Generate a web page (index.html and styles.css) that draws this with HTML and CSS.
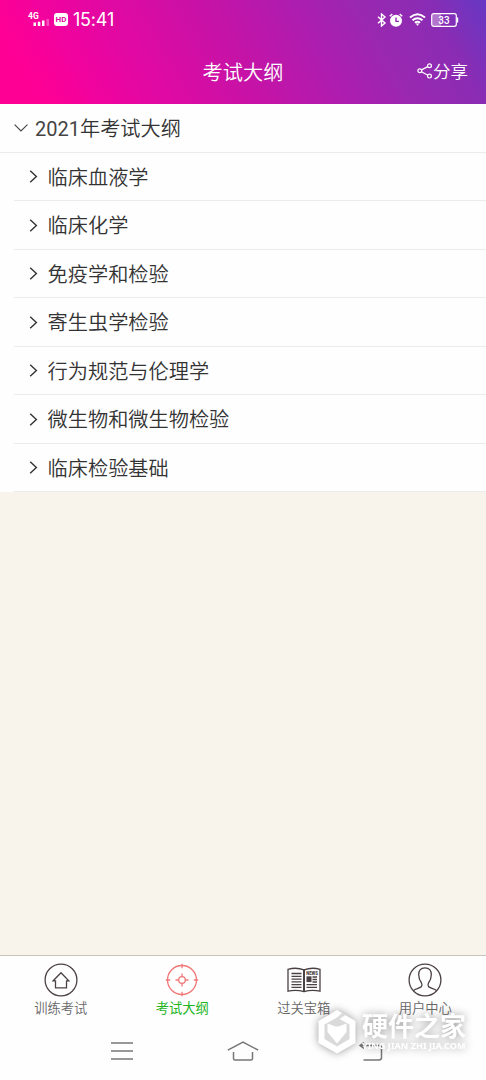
FILE: index.html
```html
<!DOCTYPE html>
<html lang="zh-CN">
<head>
<meta charset="utf-8">
<meta name="viewport" content="width=device-width">
<title>考试大纲</title>
<link rel="stylesheet" href="styles.css">
</head>
<body>
<div class="app">
  <header class="header">
    <div class="status">
      <div class="status-left">
        <svg class="signal" width="22" height="16" viewBox="0 0 22 16"><text class="net" x="0" y="7.3">4G</text><path d="M5.500 14v-3.500H8V14zM9.800 14v-4.300h2.500V14zM14 14V8.500h2.500V14z" fill="#fff"/><path d="M18.500 14V7H21v7z" fill="#fff" opacity=".3"/></svg>
        <span class="hd">HD</span>
        <span class="time">15:41</span>
      </div>
      <div class="status-right">
        <svg width="10" height="14" viewBox="0 0 10 14" fill="none" stroke="#fff" stroke-width="1.400"><path d="M1 3.800l7 6.200-3.500 3V1L8 4 1 10.200"/></svg>
        <svg class="alarm" width="14" height="14" viewBox="0 0 14 14"><circle cx="7" cy="7.800" r="6" fill="#fff"/><path d="M.8 3.200L3.300 1M13.200 3.200L10.700 1" stroke="#fff" stroke-width="1.500"/><path d="M7 4.500v3.900h3" fill="none" stroke="#9428b2" stroke-width="1.400"/></svg>
        <svg class="wifi" width="17" height="13" viewBox="0 0 17 13" fill="none" stroke="#fff" stroke-width="1.900"><path d="M1 4.500Q8.500-2 16 4.500M3.500 7.300Q8.500 3 13.500 7.300M5.900 9.800Q8.500 7.700 11.100 9.800"/><path d="M6.800 10.500h3.400L8.500 12.900z" fill="#fff" stroke="none"/></svg>
        <svg class="battery" width="28" height="14" viewBox="0 0 28 14"><rect x="1" y="1" width="9" height="12" fill="#fff" opacity=".35"/><rect x=".7" y=".7" width="24.600" height="12.600" rx="2" fill="none" stroke="#fff" stroke-width="1.200"/><path d="M26.600 4.500v5" stroke="#fff" stroke-width="1.200"/><text class="level" x="13" y="10.600" text-anchor="middle">33</text></svg>
      </div>
    </div>
    <div class="titlebar">
      <h1 class="title">考试大纲</h1>
      <div class="share">
        <svg width="16" height="16" viewBox="0 0 16 16" fill="none" stroke="#fff" stroke-width="1.200"><circle cx="2.800" cy="7.800" r="1.900"/><circle cx="12.500" cy="2.700" r="1.900"/><circle cx="12.500" cy="13.100" r="1.900"/><path d="M4.500 6.900l6.300-3.300M4.500 8.700l6.300 3.500"/></svg>
        <span>分享</span>
      </div>
    </div>
  </header>

  <main class="content">
    <div class="row parent"><svg width="14" height="8" viewBox="0 0 14 8"><path d="M.6.600L7 7 13.400.6" fill="none" stroke="#444" stroke-width="1.100"/></svg><span><span class="year">2021</span>年考试大纲</span></div>
    <div class="children">
      <div class="row child"><svg class="chev" viewBox="0 0 8 13"><path d="M.7.700l6.200 5.800L.7 12.300"/></svg><span>临床血液学</span></div>
      <div class="row child"><svg class="chev" viewBox="0 0 8 13"><path d="M.7.700l6.200 5.800L.7 12.300"/></svg><span>临床化学</span></div>
      <div class="row child"><svg class="chev" viewBox="0 0 8 13"><path d="M.7.700l6.200 5.800L.7 12.300"/></svg><span>免疫学和检验</span></div>
      <div class="row child"><svg class="chev" viewBox="0 0 8 13"><path d="M.7.700l6.200 5.800L.7 12.300"/></svg><span>寄生虫学检验</span></div>
      <div class="row child"><svg class="chev" viewBox="0 0 8 13"><path d="M.7.700l6.200 5.800L.7 12.300"/></svg><span>行为规范与伦理学</span></div>
      <div class="row child"><svg class="chev" viewBox="0 0 8 13"><path d="M.7.700l6.200 5.800L.7 12.300"/></svg><span>微生物和微生物检验</span></div>
      <div class="row child"><svg class="chev" viewBox="0 0 8 13"><path d="M.7.700l6.200 5.800L.7 12.300"/></svg><span>临床检验基础</span></div>
    </div>
  </main>

  <nav class="tabs">
    <div class="tab">
      <svg class="icon" viewBox="0 0 34 34"><circle cx="17" cy="17" r="15.900"/><path d="M9.200 17.800L17 9.700l7.800 8.100h-2.300v7H11.500v-7z"/></svg>
      <span>训练考试</span>
    </div>
    <div class="tab active">
      <svg class="icon" viewBox="0 0 34 34"><circle cx="17" cy="17" r="14.500"/><circle cx="17" cy="17" r="3.300"/><path d="M17 .8v4.400M17 28.800v4.400M.8 17h4.400M28.800 17h4.400M17 10.500v3.200M17 20.300v3.200M10.500 17h3.200M20.300 17h3.200"/></svg>
      <span>考试大纲</span>
    </div>
    <div class="tab">
      <svg class="icon" viewBox="0 0 34 34"><path d="M17 6.800Q9 4 1 6.300v21.900q8-2 16 .5 8-2.500 16-.5V6.300Q25 4 17 6.800z"/><path d="M17 6.800v21.700" stroke-width="2"/><path d="M4.500 10.500h10M4.500 13.300h10M4.500 16.100h10M4.500 18.900h10M4.500 21.700h10M4.500 24.300h10M25.500 14h4.500M25.500 16.500h4.500M25.500 19h4.500M19.500 21.700h10.500M19.500 24.300h10.500" stroke-width="1.300"/><path d="M19.500 13.300h5v5.800h-5z" fill="#4b4145" stroke="none"/><text class="news" x="19.300" y="11.900" textLength="11.500" lengthAdjust="spacingAndGlyphs">NEWS</text></svg>
      <span>过关宝箱</span>
    </div>
    <div class="tab">
      <svg class="icon" viewBox="0 0 34 34"><circle cx="17" cy="17" r="15.900"/><path d="M5.500 27.700c1.500-2 6.500-2.500 7.800-3.900.9-1 .8-2.700.2-3.800-1.700-2.200-2.800-4.800-2.800-8.200 0-4.600 2.300-7 6.300-7s6.300 2.400 6.300 7c0 3.400-1.100 6-2.800 8.200-.6 1.100-.7 2.800.2 3.800 1.300 1.400 6.300 1.900 7.800 3.900"/></svg>
      <span>用户中心</span>
    </div>
  </nav>

  <footer class="system-nav">
    <svg width="24" height="18" viewBox="0 0 24 18"><path d="M1 1h22M1 9h22M1 17h22"/></svg>
    <svg width="32" height="20" viewBox="0 0 32 20"><path d="M.8 9.200L16 1l15.200 8.200M6.500 11v6.500q0 1.500 1.500 1.500h16q1.500 0 1.500-1.500V11"/></svg>
    <svg width="31" height="20" viewBox="-7 0 31 20"><path d="M5 1.500L1 4.500l4 3M1 4.500h19q2.500 0 2.500 2.500v9.500q0 2.500-2.500 2.500H4.500"/></svg>
  </footer>

  <div class="watermark">
    <svg width="38" height="44" viewBox="0 0 38 44"><path fill="#fff" d="M19 0l18.500 11v22L19 43.500.5 33V11z"/><path d="M19 7.500L6.500 14.500v14.500L19 36.500l12.500-7.500V14.500z" fill="#dadada"/><path d="M24 3l3.500 2-7.500 5-2-1.500z" fill="#dadada"/><path d="M9.500 13.500l8 3h3l8-3v8.500L19 33.500 9.500 22z" fill="#fff"/></svg>
    <div class="mark-text"><span class="mark-name">硬件之家</span><span class="mark-site">YING JIAN ZHI JIA.COM</span></div>
  </div>
</div>
</body>
</html>
```
FILE: styles.css
```css
* { box-sizing: border-box; }
body {
  margin: 0;
  font-family: "Noto Sans CJK SC", sans-serif;
  font-weight: 350;
  color: #333;
}
svg { display: block; flex: none; }
.app {
  position: relative;
  display: flex;
  flex-direction: column;
  height: 1080px;
  overflow: hidden;
  background: #fefefe;
}
.header {
  height: 104px;
  flex: none;
  color: #fff;
  background: linear-gradient(60deg, #ff0095 8%, #ec04a0 22%, #c513a7 49%, #ac1eb0 65%, #9a28b0 76%, #8a2cb4 89%, #6638c4 100%);
}
.status {
  display: flex;
  justify-content: space-between;
  height: 39px;
  padding: 0 27px 0 28px;
}
.status-left, .status-right { display: flex; align-items: center; }
.net { font: 700 8.500px Roboto, sans-serif; fill: #fff; }
.hd {
  width: 14px;
  height: 13px;
  margin-left: 4px;
  border-radius: 3px;
  background: #fff;
  color: #df08a0;
  font: 700 8px/13px Roboto, sans-serif;
  text-align: center;
}
.time { margin-left: 5px; font: 400 18px/39px Inter, sans-serif; letter-spacing: -.2px; }
.alarm { margin-left: 2px; }
.wifi { margin-left: 6px; }
.battery { margin-left: 5px; }
.level { font: 500 10px Roboto, sans-serif; fill: #fff; }
.titlebar {
  display: grid;
  grid-template-columns: 1fr auto 1fr;
  align-items: center;
  height: 65px;
  padding: 0 18px;
}
.title { grid-column: 2; margin: 0; font-size: 20.200px; font-weight: 350; line-height: 30px; }
.share {
  display: flex;
  justify-content: flex-end;
  align-items: center;
  padding-bottom: 2px;
  font-size: 17.500px;
  line-height: 26px;
}
.content { flex: 1; background: #f8f4eb; }
.row {
  display: flex;
  align-items: center;
  height: 48.500px;
  padding-top: 1px;
  border-bottom: 1px solid #ebebeb;
  font-size: 20.200px;
  line-height: 30px;
}
.year { font-family: Roboto, sans-serif; font-weight: 400; font-size: 20px; color: #444; }
.parent { gap: 7px; padding-left: 14px; background: #fefefe; }
.children { padding-left: 14px; background: #fefefe; }
.child { gap: 9.600px; padding-left: 15px; }
.chev { width: 9px; height: 13px; fill: none; stroke: #333; stroke-width: 1.400; }
.tabs { display: flex; height: 69px; border-top: 1px solid #c8c4b8; }
.tab {
  display: flex;
  flex: 1;
  flex-direction: column;
  align-items: center;
  padding-top: 7px;
  color: #666;
  font-size: 13.300px;
  line-height: 20px;
}
.tab span { margin-top: 1px; }
.icon { width: 34px; height: 34px; fill: none; stroke: #4b4145; stroke-width: 1.300; }
.active { color: #23b51d; font-weight: 400; }
.active .icon { stroke: #ef7777; }
.news { font: 900 4.500px Roboto, sans-serif; fill: #4b4145; stroke: none; }
.system-nav {
  display: flex;
  align-items: center;
  gap: 93px;
  height: 56px;
  padding: 0 0 2px 110px;
}
.system-nav svg { fill: none; stroke: #777; stroke-width: 1.500; }
.watermark {
  position: absolute;
  left: 318px;
  top: 1010px;
  display: flex;
  gap: 6px;
  color: #fff;
  filter: drop-shadow(0 0 4px rgba(0, 0, 0, .4));
}
.mark-text { display: flex; flex-direction: column; white-space: nowrap; }
.mark-name { font-size: 26px; font-weight: 700; line-height: 30px; }
.mark-site { font: 700 9.200px/12px "Noto Sans", sans-serif; }
```
